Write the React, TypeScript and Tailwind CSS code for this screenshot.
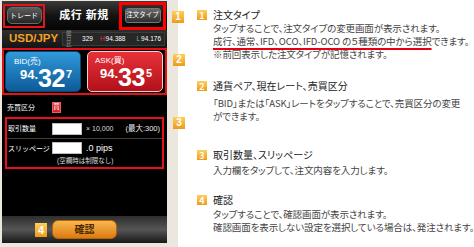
import type { ReactNode } from 'react';

function Badge({ n, className }: { n: string; className: string }) {
  return (
    <div
      className={`flex items-center justify-center bg-gradient-to-b from-[#fdd05a] to-[#ee9a10] font-bold text-white leading-none ${className}`}
    >
      {n}
    </div>
  );
}

function Phone() {
  return (
    <div className="flex h-[242px] w-[165px] flex-col bg-black text-white">
      {/* header */}
      <div className="flex h-[29px] items-center justify-between bg-gradient-to-b from-[#3a3a3a] via-[#141414] to-[#050505] px-[1px]">
        <div className="flex h-[24px] w-[42px] items-center justify-center border-2 border-[#e4141b]">
          <div className="flex h-[17px] w-[35px] items-center justify-center rounded-[5px] border border-[#6a6a6a] bg-gradient-to-b from-[#5c5c5c] to-[#262626] text-[7px] leading-none">
            トレード
          </div>
        </div>
        <div className="ml-[4px] text-[11px] font-bold leading-none tracking-[0.5px]">成行 新規</div>
        <div className="flex h-[28px] w-[47px] items-center justify-center border-[3px] border-[#ff0000]">
          <div className="flex h-[15px] w-[36px] items-center justify-center rounded-[3px] border border-[#777] bg-gradient-to-b from-[#6a6a6a] to-[#2e2e2e] text-[6.5px] leading-none">
            注文タイプ
          </div>
        </div>
      </div>

      {/* currency pair */}
      <div className="flex h-[18px] items-center bg-gradient-to-b from-[#2e2e2e] to-[#151515] pl-[7px] pr-[2px]">
        <div className="text-[11.5px] font-bold leading-none text-[#f5a023]">USD/JPY</div>
        <div className="ml-auto flex h-[14px] w-[103px] items-center border border-[#3c3c3c] bg-[#272727] px-[3px] text-[6.5px] leading-none">
          <span className="text-[5.5px] text-[#999]">前日比</span>
          <span className="ml-[7px]">329</span>
          <span className="ml-[7px] text-[#e33]">H</span>
          <span className="ml-[1px]">94.388</span>
          <span className="ml-[11px] text-[#8aa]">L</span>
          <span className="ml-[1px]">94.176</span>
        </div>
      </div>

      {/* rates */}
      <div className="flex h-[47px] gap-[6px] border-2 border-[#e60f1a] p-[1px]">
        <div className="flex h-[41px] w-[76px] flex-col rounded-[5px] border border-[#0a4676] bg-gradient-to-b from-[#3199da] to-[#0c5c98] pl-[8px] pt-[6px]">
          <div className="text-[8px] leading-none">BID(売)</div>
          <div className="ml-[6px] flex items-start font-bold leading-none">
            <span className="mt-[2px] text-[13px]">94.</span>
            <span className="text-[25px] tracking-[-0.5px]">32</span>
            <span className="ml-[1px] mt-[3px] text-[11px]">7</span>
          </div>
        </div>
        <div className="flex h-[41px] w-[76px] flex-col rounded-[5px] border-[1.5px] border-[#f3d0d0] bg-gradient-to-b from-[#e8303a] to-[#b3101a] pl-[7px] pt-[5px]">
          <div className="text-[8px] leading-none">ASK(買)</div>
          <div className="ml-[5px] flex items-start font-bold leading-none">
            <span className="mt-[2px] text-[13px]">94.</span>
            <span className="text-[25px] tracking-[-0.5px]">33</span>
            <span className="ml-[1px] mt-[3px] text-[11px]">5</span>
          </div>
        </div>
      </div>

      {/* side */}
      <div className="flex h-[21px] items-center pl-[5px] pt-[3px]">
        <div className="w-[45px] text-[7px] leading-none">売買区分</div>
        <div className="flex h-[11px] w-[9px] items-center justify-center border border-[#f05a60] bg-[#d4222a] text-[6.5px] leading-none">
          買
        </div>
      </div>

      {/* amount / slippage */}
      <div className="mx-[3px] mt-[1px] flex h-[52px] flex-col border-2 border-[#e60f1a]">
        <div className="flex h-[19px] items-center pl-[1px] pr-[2px]">
          <div className="w-[44px] text-[7px] leading-none">取引数量</div>
          <div className="h-[12px] w-[30px] border border-[#bbb] bg-white" />
          <div className="ml-[4px] text-[7px] leading-none text-[#ddd]">× 10,000</div>
          <div className="ml-auto text-[7.5px] leading-none text-[#eee]">(最大:300)</div>
        </div>
        <div className="h-px bg-[#4a3a30]" />
        <div className="flex h-[18px] items-center pl-[1px]">
          <div className="w-[44px] text-[7px] leading-none">スリッページ</div>
          <div className="h-[12px] w-[30px] border border-[#bbb] bg-white" />
          <div className="ml-[4px] text-[9px] leading-none">.0 pips</div>
        </div>
        <div className="ml-[50px] text-[6.5px] leading-[8px] text-[#ddd]">(空欄時は制限なし)</div>
      </div>

      <div className="flex-1" />

      {/* toolbar */}
      <div className="flex h-[27px] items-center bg-gradient-to-b from-[#2e2e2e] via-[#565656] to-[#1a1a1a] pl-[50px]">
        <div className="flex h-[19px] w-[65px] items-center justify-center rounded-[6px] border border-[#b86200] bg-gradient-to-b from-[#fab84c] to-[#dc7a0c] text-[10px] font-bold leading-none text-[#4a2800]">
          確認
        </div>
      </div>
    </div>
  );
}

function Section({
  n,
  title,
  className,
  bodyClass,
  children,
}: {
  n: string;
  title: string;
  className: string;
  bodyClass: string;
  children: ReactNode;
}) {
  return (
    <div className={`grid grid-cols-[10px_1fr] gap-x-[6px] ${className}`}>
      <Badge n={n} className="mt-[2px] h-[10px] w-[10px] text-[9px]" />
      <div className="text-[10px] leading-[14px] text-[#222]">{title}</div>
      <div className={`col-start-2 text-[9.5px] leading-[13px] tracking-[-0.1px] text-[#444] ${bodyClass}`}>
        {children}
      </div>
    </div>
  );
}

export default function App() {
  return (
    <div className="flex h-[247px] w-[474px] overflow-hidden bg-white font-['Liberation_Sans','Noto_Sans_CJK_JP',sans-serif]">
      <div className="relative h-full w-[178px] shrink-0 bg-[#ebe7df] pl-[2px] pt-[1px]">
        <Phone />
        <Badge n="1" className="absolute left-[172px] top-[11px] h-[12px] w-[12px] text-[10px]" />
        <Badge n="2" className="absolute left-[173px] top-[54px] h-[12px] w-[12px] text-[10px]" />
        <Badge n="3" className="absolute left-[173px] top-[117px] h-[12px] w-[12px] text-[10px]" />
        <Badge n="4" className="absolute left-[35px] top-[223px] h-[14px] w-[12px] text-[11px]" />
      </div>

      <div className="flex flex-1 flex-col whitespace-nowrap pl-[19px] pt-[8px] [font-feature-settings:'palt'] font-['Noto_Sans_CJK_JP',sans-serif]">
        <Section n="1" title="注文タイプ" className="" bodyClass="">
          <div>タップすることで、注文タイプの変更画面が表示されます。</div>
          <div>
            <span className="underline decoration-[#e60012] decoration-2 underline-offset-[3px]">
              成行、通常、IFD、OCO、IFD-OCO の５種類の中から選択
            </span>
            できます。
          </div>
          <div>※前回表示した注文タイプが記憶されます。</div>
        </Section>
        <Section n="2" title="通貨ペア、現在レート、売買区分" className="mt-[18px]" bodyClass="mt-[4px]">
          <div>「BID」または「ASK」レートをタップすることで、売買区分の変更</div>
          <div>ができます。</div>
        </Section>
        <Section n="3" title="取引数量、スリッページ" className="mt-[25px]" bodyClass="mt-[2px]">
          <div>入力欄をタップして、注文内容を入力します。</div>
        </Section>
        <Section n="4" title="確認" className="mt-[16px]" bodyClass="mt-[1px]">
          <div>タップすることで、確認画面が表示されます。</div>
          <div>確認画面を表示しない設定を選択している場合は、発注されます。</div>
        </Section>
      </div>
    </div>
  );
}
